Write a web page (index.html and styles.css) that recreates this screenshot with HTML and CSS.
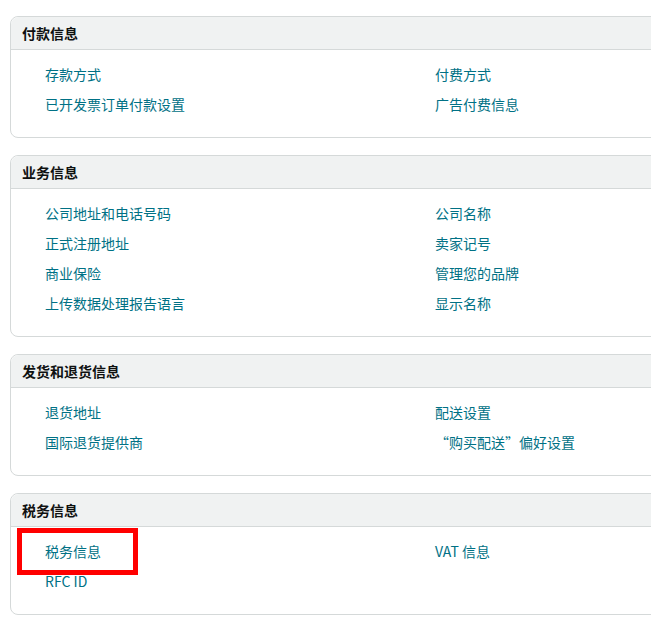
FILE: index.html
```html
<!DOCTYPE html>
<html lang="zh">
<head>
<meta charset="utf-8">
<link rel="stylesheet" href="styles.css">
</head>
<body>
<div class="page">
  <section class="card">
    <div class="card-head">付款信息</div>
    <div class="card-body">
      <a class="link">存款方式</a><a class="link">付费方式</a>
      <a class="link">已开发票订单付款设置</a><a class="link">广告付费信息</a>
    </div>
  </section>
  <section class="card">
    <div class="card-head">业务信息</div>
    <div class="card-body">
      <a class="link">公司地址和电话号码</a><a class="link">公司名称</a>
      <a class="link">正式注册地址</a><a class="link">卖家记号</a>
      <a class="link">商业保险</a><a class="link">管理您的品牌</a>
      <a class="link">上传数据处理报告语言</a><a class="link">显示名称</a>
    </div>
  </section>
  <section class="card">
    <div class="card-head">发货和退货信息</div>
    <div class="card-body">
      <a class="link">退货地址</a><a class="link">配送设置</a>
      <a class="link">国际退货提供商</a><a class="link">“购买配送”偏好设置</a>
    </div>
  </section>
  <section class="card">
    <div class="card-head">税务信息</div>
    <div class="card-body">
      <a class="link highlighted">税务信息<span class="mark"></span></a><a class="link">VAT 信息</a>
      <a class="link">RFC ID</a><span></span>
    </div>
  </section>
</div>
</body>
</html>
```
FILE: styles.css
```css
html, body {
  margin: 0;
  padding: 0;
  background: #ffffff;
  overflow: hidden;
}
body {
  font-family: "Noto Sans CJK SC", "Noto Sans", "Liberation Sans", sans-serif;
  font-size: 14px;
  color: #0f1111;
}
.page {
  padding: 16px 0 0 10px;
  display: flex;
  flex-direction: column;
  gap: 17px;
  width: 700px;
}
.card {
  border: 1px solid #d5d9d9;
  border-radius: 8px;
}
.card-head {
  height: 32px;
  line-height: 32px;
  padding-left: 11px;
  background: #f0f2f2;
  border-bottom: 1px solid #d5d9d9;
  border-radius: 8px 8px 0 0;
  font-weight: 700;
  font-size: 14px;
  color: #0f1111;
}
.card-body {
  display: grid;
  grid-template-columns: 390px 1fr;
  grid-auto-rows: 30px;
  padding: 9px 0 18px 34px;
}
.link {
  line-height: 30px;
  color: #007185;
  white-space: nowrap;
  text-decoration: none;
}
.highlighted {
  position: relative;
}
.mark {
  position: absolute;
  left: -28px;
  top: -8px;
  width: 111px;
  height: 37px;
  border: 5px solid #ff0000;
}
```
